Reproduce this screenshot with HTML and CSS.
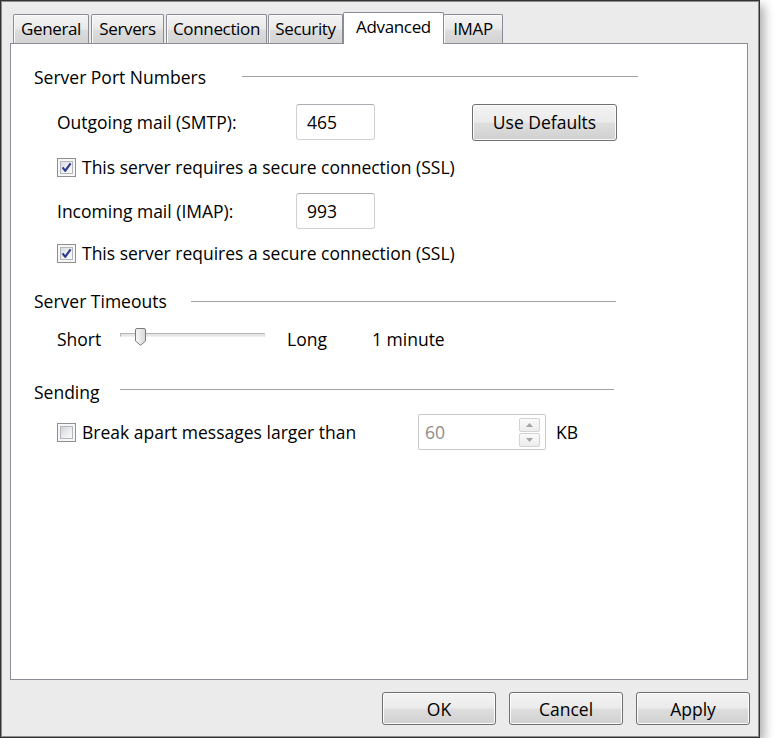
FILE: index.html
```html
<!DOCTYPE html>
<html>
<head>
<meta charset="utf-8">
<title>Advanced</title>
<link rel="stylesheet" href="styles.css">
</head>
<body>
<div class="dialog">
  <div class="tabs">
    <div class="tab tab-general">General</div>
    <div class="tab tab-servers">Servers</div>
    <div class="tab tab-connection">Connection</div>
    <div class="tab tab-security">Security</div>
    <div class="tab tab-advanced is-active">Advanced</div>
    <div class="tab tab-imap">IMAP</div>
  </div>
  <div class="panel">
    <div class="group-head head-ports"><span class="group-title">Server Port Numbers</span><span class="group-line"></span></div>

    <div class="row port-row row-smtp">
      <span class="port-label">Outgoing mail (SMTP):</span>
      <span class="textbox port-box">465</span>
      <button class="btn btn-defaults">Use Defaults</button>
    </div>

    <div class="row check-row row-ssl1">
      <span class="check"><span class="check-box is-checked"><svg width="11" height="11" viewBox="0 0 11 11"><path d="M1.6 5.4 L4.2 8.8 L9.6 1.4" fill="none" stroke="#2b3a8c" stroke-width="2.1" stroke-linejoin="round"/></svg></span></span>
      <span class="check-text">This server requires a secure connection (SSL)</span>
    </div>

    <div class="row port-row row-imap">
      <span class="port-label">Incoming mail (IMAP):</span>
      <span class="textbox port-box">993</span>
    </div>

    <div class="row check-row row-ssl2">
      <span class="check"><span class="check-box is-checked"><svg width="11" height="11" viewBox="0 0 11 11"><path d="M1.6 5.4 L4.2 8.8 L9.6 1.4" fill="none" stroke="#2b3a8c" stroke-width="2.1" stroke-linejoin="round"/></svg></span></span>
      <span class="check-text">This server requires a secure connection (SSL)</span>
    </div>

    <div class="group-head head-timeouts"><span class="group-title">Server Timeouts</span><span class="group-line"></span></div>

    <div class="row slider-row">
      <span class="slider-short">Short</span>
      <span class="slider">
        <span class="slider-track"></span>
        <svg class="slider-thumb" width="11" height="18" viewBox="0 0 11 18">
          <defs>
            <linearGradient id="thumbFill" x1="0" y1="0" x2="1" y2="0">
              <stop offset="0" stop-color="#f7f7f7"/>
              <stop offset="1" stop-color="#d9d9d9"/>
            </linearGradient>
          </defs>
          <path d="M2 0.5 H9 Q10.5 0.5 10.5 2 V13 L5.5 17.3 L0.5 13 V2 Q0.5 0.5 2 0.5 Z" fill="url(#thumbFill)" stroke="#7a7a7a"/>
        </svg>
      </span>
      <span class="slider-long">Long</span>
      <span class="slider-value">1 minute</span>
    </div>

    <div class="group-head head-sending"><span class="group-title">Sending</span><span class="group-line"></span></div>

    <div class="row break-row">
      <span class="check"><span class="check-box"></span></span>
      <span class="check-text break-text">Break apart messages larger than</span>
      <span class="spinner">
        <span class="spinner-value">60</span>
        <span class="spin-buttons">
          <span class="spin-btn"><svg width="7" height="4" viewBox="0 0 7 4"><path d="M0 4 L3.5 0 L7 4 Z" fill="#a4a4a4"/></svg></span>
          <span class="spin-btn"><svg width="7" height="4" viewBox="0 0 7 4"><path d="M0 0 L3.5 4 L7 0 Z" fill="#a4a4a4"/></svg></span>
        </span>
      </span>
      <span class="kb">KB</span>
    </div>
  </div>

  <div class="actions">
    <button class="btn btn-dlg">OK</button>
    <button class="btn btn-dlg">Cancel</button>
    <button class="btn btn-dlg">Apply</button>
  </div>
</div>
</body>
</html>
```

FILE: styles.css
```css
html, body {
  margin: 0;
  padding: 0;
  background: #ffffff;
}

body {
  font-family: "Open Sans", "Noto Sans", "Liberation Sans", sans-serif;
  font-size: 17.5px;
  color: #000;
}

.dialog {
  box-sizing: border-box;
  width: 760px;
  height: 738px;
  border: 1px solid #333;
  background: #ebebeb;
  box-shadow: 4px 5px 10px rgba(0, 0, 0, 0.33), inset 0 0 0 1px #8d8d8d;
  padding: 11px 9px 12px 9px;
  display: flex;
  flex-direction: column;
}

/* Tabs */
.tabs {
  display: flex;
  align-items: flex-end;
  height: 31px;
  padding-left: 3px;
  font-size: 17px;
  letter-spacing: -0.35px;
}

.tab {
  box-sizing: border-box;
  height: 29px;
  border: 1px solid #898c95;
  border-bottom: none;
  border-radius: 2px 2px 0 0;
  background: linear-gradient(#f4f4f4 0%, #e9e9e9 50%, #dcdcdc 55%, #d3d3d3 100%);
  box-shadow: inset 1px 1px 0 #fbfbfb;
  display: flex;
  align-items: center;
  justify-content: center;
  padding-bottom: 1px;
  margin-right: 2px;
  white-space: nowrap;
}

.tab-general { width: 76px; }
.tab-servers { width: 73px; }
.tab-connection { width: 101px; margin-right: 1px; }
.tab-security { width: 75px; margin-right: 0; }
.tab-advanced { width: 101px; }
.tab-imap { width: 60px; margin-left: -1px; }

.tab.is-active {
  position: relative;
  z-index: 1;
  height: 32px;
  margin-bottom: -1px;
  margin-right: 0;
  background: #ffffff;
  box-shadow: none;
  padding-bottom: 4px;
}

/* Panel */
.panel {
  box-sizing: border-box;
  height: 637px;
  margin-right: 2px;
  border: 1px solid #898c95;
  background: #ffffff;
  padding: 21px 0 0 23px;
  display: flex;
  flex-direction: column;
  align-items: flex-start;
}

.group-head {
  display: flex;
  align-items: center;
  height: 24px;
}

.group-title {
  flex: none;
  white-space: nowrap;
}

.group-line {
  flex: 1;
  height: 1px;
  background: #a2a2a2;
  margin-top: -1px;
}

.head-ports { width: 604px; }
.head-ports .group-title { width: 208px; }

.head-timeouts { width: 582px; margin-top: 26px; }
.head-timeouts .group-title { width: 157px; }
.head-timeouts .group-line { margin-top: 0; }

.head-sending { width: 580px; margin-top: 29px; }
.head-sending .group-title { width: 86px; }
.head-sending .group-line { margin-top: -6px; }

.row {
  display: flex;
  align-items: center;
  margin-left: 23px;
  white-space: nowrap;
}

/* Port rows */
.port-row { height: 36px; }
.row-smtp { margin-top: 15px; }
.row-imap { margin-top: 16px; }

.port-label {
  width: 239px;
  padding-bottom: 1px;
}

.textbox {
  box-sizing: border-box;
  height: 36px;
  border: 1px solid #cfd0d4;
  border-top-color: #abadb3;
  border-radius: 3px;
  background: #fff;
  display: flex;
  align-items: center;
}

.port-box {
  width: 79px;
  padding-left: 10px;
}

.btn {
  font: inherit;
  color: #000;
  box-sizing: border-box;
  border: 1px solid #707070;
  border-radius: 3px;
  background: linear-gradient(#f3f3f3 0%, #ebebeb 48%, #dedede 52%, #d0d0d0 100%);
  box-shadow: inset 0 0 0 1px #fbfbfb;
  padding: 0;
  cursor: default;
}

.btn-defaults {
  width: 145px;
  height: 37px;
  margin-left: 97px;
}

/* Checkbox rows */
.check-row { height: 19px; }
.row-ssl1 { margin-top: 18px; }
.row-ssl2 { margin-top: 15px; }

.check {
  flex: none;
  box-sizing: border-box;
  width: 19px;
  height: 19px;
  border: 1px solid #8e8f8f;
  background: #f7f7f7;
  padding: 2px;
}

.check-box {
  display: flex;
  align-items: center;
  justify-content: center;
  box-sizing: border-box;
  width: 13px;
  height: 13px;
  border: 1px solid #b3b6bb;
  background: linear-gradient(135deg, #d0d2d6 0%, #e9eaec 50%, #fbfbfb 100%);
}

.check-box.is-checked {
  background: linear-gradient(135deg, #dadce2 0%, #eef0f3 55%, #fbfbfb 100%);
}

.check-text {
  margin-left: 6px;
  padding-bottom: 1px;
}

/* Slider */
.slider-row {
  height: 24px;
  margin-top: 14px;
}

.slider-short { width: 63px; }

.slider {
  position: relative;
  width: 145px;
  height: 24px;
}

.slider-track {
  display: block;
  box-sizing: border-box;
  width: 100%;
  height: 4px;
  margin-top: 6px;
  border: 1px solid #b4b4b4;
  border-bottom-color: #efefef;
  border-right-color: #dcdcdc;
  background: #e6e6e6;
}

.slider-thumb {
  position: absolute;
  left: 15px;
  top: 1px;
}

.slider-long {
  margin-left: 22px;
  width: 85px;
}

/* Break apart row */
.break-row {
  height: 36px;
  margin-top: 10px;
}

.break-text { width: 336px; }

.spinner {
  box-sizing: border-box;
  width: 128px;
  height: 36px;
  border: 1px solid #c9c9c9;
  border-radius: 2px;
  background: #fff;
  display: flex;
  align-items: center;
  justify-content: space-between;
  padding: 0 5px 0 6px;
}

.spinner-value { color: #8d8d8d; }

.spin-buttons {
  display: flex;
  flex-direction: column;
  gap: 1px;
}

.spin-btn {
  box-sizing: border-box;
  width: 21px;
  height: 14px;
  border: 1px solid #d3d3d3;
  border-radius: 2px;
  background: linear-gradient(#fafafa, #ececec);
  display: flex;
  align-items: center;
  justify-content: center;
}

.kb { margin-left: 10px; }

/* Dialog buttons */
.actions {
  display: flex;
  justify-content: flex-end;
  gap: 13px;
  margin-top: 12px;
}

.btn-dlg {
  width: 114px;
  height: 33px;
}
```
